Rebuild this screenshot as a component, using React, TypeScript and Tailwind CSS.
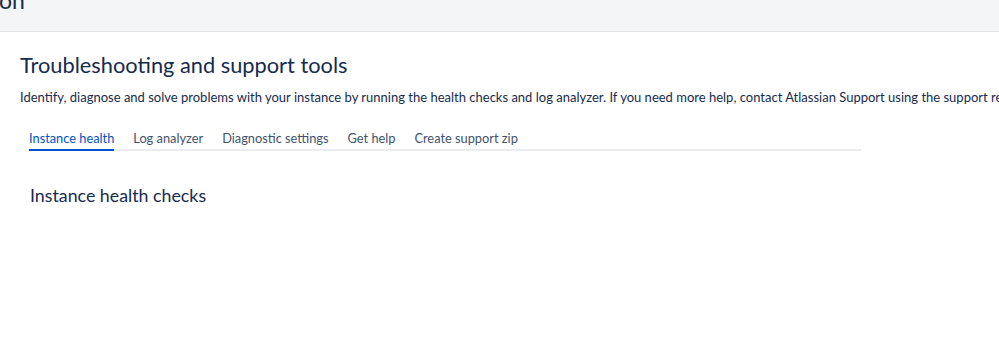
const tabs = [
  "Instance health",
  "Log analyzer",
  "Diagnostic settings",
  "Get help",
  "Create support zip",
];

export default function App() {
  return (
    <div
      className="w-[999px] h-[339px] overflow-hidden bg-[#f4f5f7] text-[#172b4d]"
      style={{ fontFamily: 'Lato, "Noto Sans", sans-serif' }}
    >
      <div className="h-[32px] border-b border-[#dfe1e6] overflow-hidden">
        <div className="text-[23px] leading-none -mt-[11px] -ml-[1px]">on</div>
      </div>
      <div className="flex h-full">
        <div className="w-[2px] bg-[#f0f0f0]" />
        <div className="flex-1 bg-white pl-[20px] pt-[20px]">
          <h1 className="text-[21.8px] leading-[26px] whitespace-nowrap">
            Troubleshooting and support tools
          </h1>
          <p className="mt-[9px] text-[13px] leading-[20px] whitespace-nowrap">
            Identify, diagnose and solve problems with your instance by running the health checks and log analyzer. If you need more help, contact Atlassian Support using the support request form.
          </p>
          <div className="ml-[9px] mt-[21px] w-[832px] flex gap-[19px] border-b-2 border-[#ebecf0]">
            {tabs.map((t, i) => (
              <div
                key={t}
                className={
                  i === 0
                    ? "text-[12.8px] leading-[20px] pb-[1px] -mb-[2px] border-b-2 border-[#0052cc] text-[#0052cc]"
                    : "text-[12.8px] leading-[20px] pb-[1px] text-[#42526e]"
                }
              >
                {t}
              </div>
            ))}
          </div>
          <h2 className="ml-[10px] mt-[32px] text-[17.8px] leading-[24px]">
            Instance health checks
          </h2>
        </div>
      </div>
    </div>
  );
}
